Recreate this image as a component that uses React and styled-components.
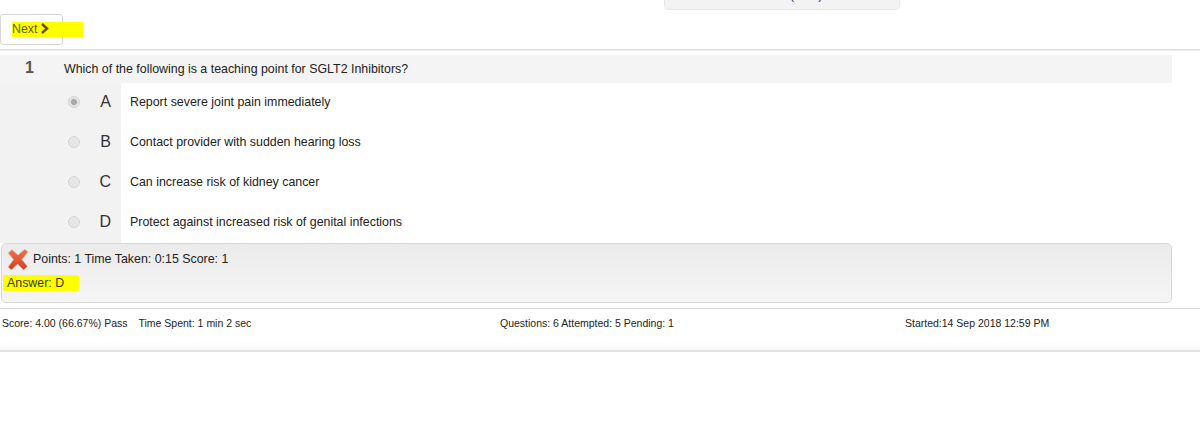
import React from 'react';
import styled, { createGlobalStyle } from 'styled-components';

const GlobalStyle = createGlobalStyle`
  html, body {
    margin: 0;
    padding: 0;
    background: #fff;
    color: #222;
    font-family: "Liberation Sans", Arial, sans-serif;
  }
`;

const Page = styled.div`
  width: 1200px;
  height: 438px;
  overflow: hidden;
`;

const TopBar = styled.div`
  display: flex;
  height: 50px;
  box-sizing: border-box;
  border-bottom: 1px solid #dcdcdc;
  box-shadow: 0 1px 0 #eee;
`;

const NextButton = styled.button`
  position: relative;
  align-self: flex-start;
  width: 63px;
  height: 31px;
  margin-top: 14px;
  padding: 0 0 2px 11px;
  display: flex;
  align-items: center;
  background: #fff;
  border: 1px solid #d8d8d8;
  border-radius: 3px;
  color: #6b5a00;
  font: 12.4px "Liberation Sans", Arial, sans-serif;
`;

const NextMark = styled.span`
  position: absolute;
  left: 11px;
  top: 7px;
  width: 71px;
  height: 15px;
  background: #ffff00;
`;

const NextLabel = styled.span`
  position: relative;
  display: flex;
  align-items: center;
  gap: 3px;
`;

const TopPanel = styled.div`
  width: 236px;
  height: 10px;
  margin-left: 601px;
  box-sizing: border-box;
  overflow: hidden;
  padding-left: 125px;
  background: #f3f3f3;
  border: 1px solid #e4e8ec;
  border-top: 0;
  border-radius: 0 0 5px 5px;
`;

const PanelText = styled.div`
  margin-top: -11px;
  font-size: 12.4px;
  line-height: 12px;
  color: #336;
`;

const Question = styled.div`
  width: 1172px;
  margin-top: 5px;
`;

const PromptRow = styled.div`
  display: flex;
  height: 28px;
  background: #f4f4f4;
`;

const QuestionNumber = styled.div`
  width: 59px;
  text-align: center;
  font-size: 16px;
  font-weight: bold;
  line-height: 25px;
  color: #555;
`;

const PromptText = styled.div`
  flex: 1;
  padding-left: 5px;
  font-size: 12.4px;
  line-height: 28px;
  color: #222;
`;

const Choice = styled.div`
  display: flex;
  height: 40px;
  align-items: stretch;
`;

const ChoiceSide = styled.div`
  display: flex;
  align-items: center;
  width: 121px;
  padding: 0 0 2px 68px;
  box-sizing: border-box;
  background: #f2f2f2;
`;

const Radio = styled.span`
  width: 12px;
  height: 12px;
  box-sizing: border-box;
  border: 1px solid #d4d4d4;
  border-radius: 50%;
  background: ${(p) => (p.$checked
    ? 'radial-gradient(circle, #a8a8a8 0 2.5px, #e2e2e2 3.5px)'
    : '#e6e6e6')};
`;

const Letter = styled.span`
  width: 31px;
  text-align: right;
  font-size: 16px;
  color: #333;
`;

const ChoiceText = styled.div`
  padding: 0 0 2px 9px;
  display: flex;
  align-items: center;
  font-size: 12.4px;
  color: #222;
`;

const Feedback = styled.div`
  width: 1171px;
  height: 60px;
  margin-left: 1px;
  box-sizing: border-box;
  padding: 3px 0 0 5px;
  border: 1px solid #d8d8d8;
  border-radius: 5px;
  background: linear-gradient(#ebebeb, #f5f5f5);
`;

const ScoreLine = styled.div`
  display: flex;
  align-items: center;
  gap: 4px;
  height: 24px;
  font-size: 12.4px;
  color: #222;
`;

const AnswerLine = styled.div`
  position: relative;
  margin-top: 4px;
  font-size: 12.4px;
  line-height: 16px;
  color: #3a3a00;
`;

const AnswerMark = styled.span`
  position: absolute;
  left: -4px;
  top: 0;
  width: 76px;
  height: 16px;
  border-radius: 2px;
  background: #ffff00;
`;

const AnswerLabel = styled.span`
  position: relative;
`;

const Footer = styled.div`
  margin-top: 5px;
  height: 44px;
  box-sizing: border-box;
  padding-left: 2px;
  display: grid;
  grid-template-columns: 498px 405px 1fr;
  border-top: 1px solid #dcdcdc;
  border-bottom: 2px solid #e2e2e2;
  background: linear-gradient(#fff 0, #fff 32px, #f7f7f7 42px);
  font-size: 10.5px;
  line-height: 29px;
  color: #222;
`;

const FooterLeft = styled.div`
  display: flex;
  gap: 11px;
`;

const CrossIcon = () => (
  <svg width="22" height="23" viewBox="0 0 22 22">
    <defs>
      <linearGradient id="cross" x1="0" y1="0" x2="0" y2="1">
        <stop offset="0" stopColor="#f07550" />
        <stop offset="1" stopColor="#d63c1c" />
      </linearGradient>
    </defs>
    <path
      d="M1 4.5 L5 1 L11 6.5 L18 0.5 L21 3.5 L15 11 L20.5 18 L16.5 21.5 L10.5 15.5 L4.5 21.5 L1 18.5 L6.5 11 Z"
      fill="url(#cross)"
      stroke="#d8d0ca"
      strokeWidth="0.6"
      strokeLinejoin="round"
    />
  </svg>
);

const Chevron = () => (
  <svg width="9" height="11" viewBox="0 0 9 11">
    <path d="M2 1 L7 5.5 L2 10" fill="none" stroke="#6b4a00" strokeWidth="2.4" />
  </svg>
);

const choices = [
  { letter: 'A', text: 'Report severe joint pain immediately', checked: true },
  { letter: 'B', text: 'Contact provider with sudden hearing loss' },
  { letter: 'C', text: 'Can increase risk of kidney cancer' },
  { letter: 'D', text: 'Protect against increased risk of genital infections' },
];

const App = () => (
  <Page>
    <GlobalStyle />
    <TopBar>
      <NextButton>
        <NextMark />
        <NextLabel>Next <Chevron /></NextLabel>
      </NextButton>
      <TopPanel>
        <PanelText>(0:15)</PanelText>
      </TopPanel>
    </TopBar>
    <Question>
      <PromptRow>
        <QuestionNumber>1</QuestionNumber>
        <PromptText>Which of the following is a teaching point for SGLT2 Inhibitors?</PromptText>
      </PromptRow>
      {choices.map((c) => (
        <Choice key={c.letter}>
          <ChoiceSide>
            <Radio $checked={c.checked} />
            <Letter>{c.letter}</Letter>
          </ChoiceSide>
          <ChoiceText>{c.text}</ChoiceText>
        </Choice>
      ))}
      <Feedback>
        <ScoreLine>
          <CrossIcon />
          Points: 1 Time Taken: 0:15 Score: 1
        </ScoreLine>
        <AnswerLine>
          <AnswerMark />
          <AnswerLabel>Answer: D</AnswerLabel>
        </AnswerLine>
      </Feedback>
    </Question>
    <Footer>
      <FooterLeft>
        <span>Score: 4.00 (66.67%) Pass</span>
        <span>Time Spent: 1 min 2 sec</span>
      </FooterLeft>
      <span>Questions: 6 Attempted: 5 Pending: 1</span>
      <span>Started:14 Sep 2018 12:59 PM</span>
    </Footer>
  </Page>
);

export default App;
